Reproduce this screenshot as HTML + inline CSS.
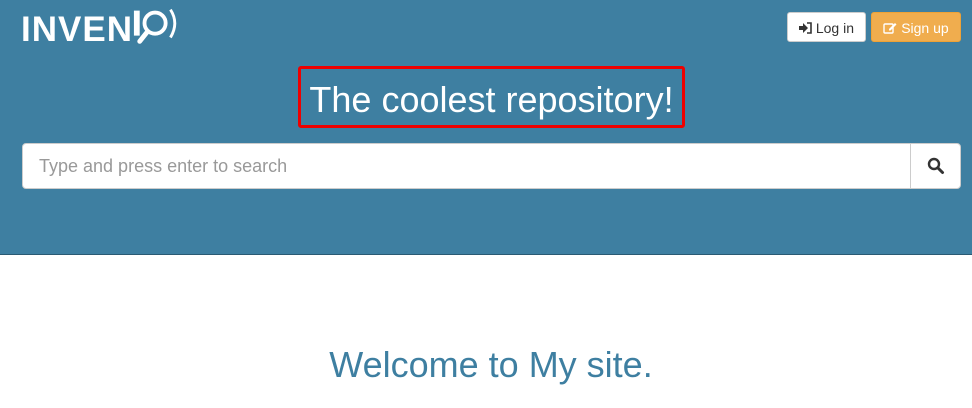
<!DOCTYPE html>
<html><head><style>
body{margin:0;width:972px;height:408px;overflow:hidden;background:#fff;font-family:"Liberation Sans",sans-serif}
.hdr{position:absolute;left:0;top:0;width:972px;height:254px;background:#3e7fa1;border-bottom:1px solid #2a5a73}
.logo{position:absolute;left:21px;top:5px;color:#fff;font-weight:bold;font-size:35px;letter-spacing:1px;transform:scaleX(1.0);transform-origin:left}
.btn{position:absolute;top:12px;height:30px;border-radius:3px;font-size:14px;line-height:30px;box-sizing:border-box}
.login{left:787px;width:79px;background:#fff;border:1px solid #ccc;color:#333;text-align:center}
.signup{left:871px;width:90px;background:#f0ad4e;border:1px solid #eea236;color:#fff;text-align:center}
.title{position:absolute;left:298px;top:66px;width:387px;height:62px;box-sizing:border-box;border:3px solid #e00;border-radius:3px;color:#fff;font-size:36px;text-align:center;line-height:62px}
.search{position:absolute;left:22px;top:143px;width:939px;height:46px;box-sizing:border-box;background:#fff;border:1px solid #ccc;border-radius:4px}
.search span{position:absolute;left:16px;top:12px;font-size:18px;color:#999}
.sbtn{position:absolute;right:0;top:0;width:49px;height:44px;border-left:1px solid #ccc;background:#fff;border-radius:0 4px 4px 0}
.welcome{position:absolute;left:0;width:982px;top:344px;text-align:center;font-size:36px;color:#3e7fa1}
</style></head><body>
<div class="hdr">
<div class="logo">INVEN<svg width="50" height="42" viewBox="0 0 52 42" style="vertical-align:-6px;margin-left:-1px"><rect x="2" y="5" width="6" height="26" fill="#fff"/><circle cx="24" cy="18" r="11" fill="none" stroke="#fff" stroke-width="4"/><line x1="16" y1="27" x2="8" y2="37" stroke="#fff" stroke-width="5" stroke-linecap="round"/><path d="M40 4 Q49 18 40 33" fill="none" stroke="#fff" stroke-width="3"/></svg></div>
<div class="btn login"><svg width="13" height="12" viewBox="0 0 13 12" style="vertical-align:-1px"><path d="M0 4h4V1l5 5-5 5V8H0z" fill="#333"/><path d="M8 1h4v10H8" fill="none" stroke="#333" stroke-width="1.6"/></svg> Log in</div>
<div class="btn signup"><svg width="14" height="12" viewBox="0 0 14 12" style="vertical-align:-1px"><rect x="1" y="2" width="9" height="9" fill="none" stroke="#fff" stroke-width="1.4" rx="1"/><path d="M6 7l6-6 1.5 1.5-6 6H6z" fill="#fff"/></svg> Sign up</div>
<div class="title">The coolest repository!</div>
<div class="search"><span>Type and press enter to search</span><div class="sbtn"><svg width="18" height="18" viewBox="0 0 18 18" style="position:absolute;left:16px;top:13px"><circle cx="7" cy="7" r="5" fill="none" stroke="#333" stroke-width="2.4"/><line x1="11" y1="11" x2="15.5" y2="15.5" stroke="#333" stroke-width="3" stroke-linecap="round"/></svg></div></div>
</div>
<div class="welcome">Welcome to My site.</div>
</body></html>
